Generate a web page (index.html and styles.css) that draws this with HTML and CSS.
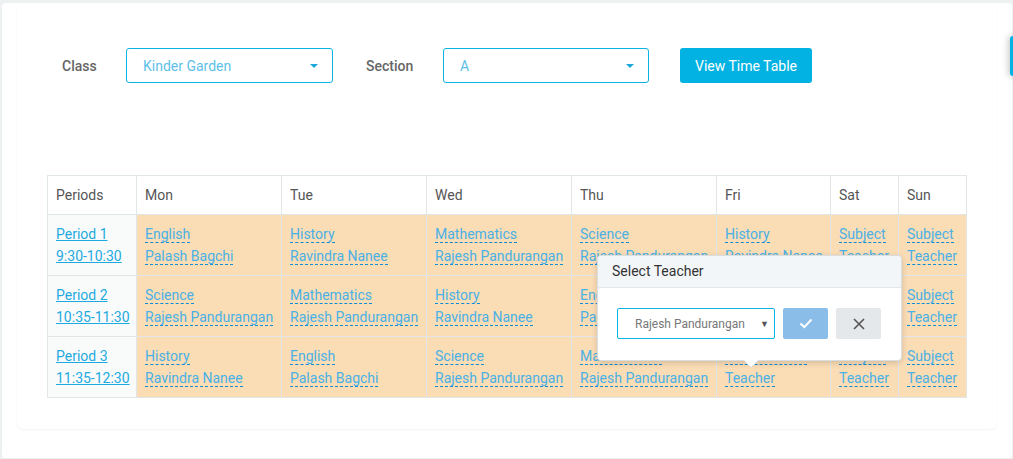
FILE: index.html
```html
<!DOCTYPE html>
<html lang="en">
<head>
  <meta charset="UTF-8">
  <meta name="viewport" content="width=device-width, initial-scale=1.0">
  <title>Time Table</title>
  <link rel="stylesheet" href="styles.css">
</head>
<body>
  <div class="panel">
    <div class="card">
      <!-- Filtros -->
      <div class="filters">
        <label class="f-label">Class</label>
        <div class="select class-select"><span>Kinder Garden</span><i class="caret"></i></div>
        <label class="f-label section-label">Section</label>
        <div class="select section-select"><span>A</span><i class="caret"></i></div>
        <button class="btn-view">View Time Table</button>
      </div>

      <!-- Tabela -->
      <div class="timetable-wrap">
        <table class="timetable">
          <colgroup>
            <col style="width:89px"><col style="width:145px"><col style="width:145px"><col style="width:145px">
            <col style="width:145px"><col style="width:114px"><col style="width:68px"><col style="width:68px">
          </colgroup>
          <thead>
            <tr>
              <th>Periods</th><th>Mon</th><th>Tue</th><th>Wed</th><th>Thu</th><th>Fri</th><th>Sat</th><th>Sun</th>
            </tr>
          </thead>
          <tbody>
            <tr>
              <td class="period"><a href="#">Period 1 </a><br><a href="#">9:30-10:30</a></td>
              <td><a class="ed">English</a><br><a class="ed">Palash Bagchi</a></td>
              <td><a class="ed">History</a><br><a class="ed">Ravindra Nanee</a></td>
              <td><a class="ed">Mathematics</a><br><a class="ed">Rajesh Pandurangan</a></td>
              <td><a class="ed">Science</a><br><a class="ed">Rajesh Pandurangan</a></td>
              <td><a class="ed">History</a><br><a class="ed">Ravindra Nanee</a></td>
              <td><a class="ed">Subject</a><br><a class="ed">Teacher</a></td>
              <td><a class="ed">Subject</a><br><a class="ed">Teacher</a></td>
            </tr>
            <tr>
              <td class="period"><a href="#">Period 2 </a><br><a href="#">10:35-11:30</a></td>
              <td><a class="ed">Science</a><br><a class="ed">Rajesh Pandurangan</a></td>
              <td><a class="ed">Mathematics</a><br><a class="ed">Rajesh Pandurangan</a></td>
              <td><a class="ed">History</a><br><a class="ed">Ravindra Nanee</a></td>
              <td><a class="ed">English</a><br><a class="ed">Palash Bagchi</a></td>
              <td><a class="ed">English</a><br><a class="ed">Palash Bagchi</a></td>
              <td><a class="ed">Subject</a><br><a class="ed">Teacher</a></td>
              <td><a class="ed">Subject</a><br><a class="ed">Teacher</a></td>
            </tr>
            <tr>
              <td class="period"><a href="#">Period 3 </a><br><a href="#">11:35-12:30</a></td>
              <td><a class="ed">History</a><br><a class="ed">Ravindra Nanee</a></td>
              <td><a class="ed">English</a><br><a class="ed">Palash Bagchi</a></td>
              <td><a class="ed">Science</a><br><a class="ed">Rajesh Pandurangan</a></td>
              <td><a class="ed">Mathematics</a><br><a class="ed">Rajesh Pandurangan</a></td>
              <td><a class="ed">Mathematics</a><br><a class="ed">Teacher</a></td>
              <td><a class="ed">Subject</a><br><a class="ed">Teacher</a></td>
              <td><a class="ed">Subject</a><br><a class="ed">Teacher</a></td>
            </tr>
          </tbody>
        </table>

        <!-- Popup de edição -->
        <div class="popover">
          <div class="popover-title">Select Teacher</div>
          <div class="popover-body">
            <div class="pop-select"><span>Rajesh Pandurangan</span><i>&#9660;</i></div>
            <button class="btn-ok">
              <svg width="14" height="11" viewBox="0 0 14 11"><path d="M1.5 5.5l3.8 3.6L12.5 1.5" fill="none" stroke="#fff" stroke-width="2"/></svg>
            </button>
            <button class="btn-cancel">
              <svg width="12" height="12" viewBox="0 0 12 12"><path d="M1 1l10 10M11 1L1 11" fill="none" stroke="#555" stroke-width="1.6"/></svg>
            </button>
          </div>
        </div>
      </div>
    </div>
  </div>
  <div class="side-tab"></div>
</body>
</html>
```

FILE: styles.css
```css
body {
  margin: 0;
  padding: 0;
  height: 459px;
  overflow: hidden;
  background-color: #eef1f2;
  font-family: Roboto, "Liberation Sans", sans-serif;
  font-size: 14px;
  color: #555;
}

.panel {
  margin: 3px 1px 0 2px;
  height: 455px;
  padding: 0 15px;
  background-color: #fff;
  border-radius: 4px;
}

.card {
  height: 426px;
  padding: 45px 30px 0;
  box-sizing: border-box;
  border-radius: 0 0 6px 6px;
  box-shadow: 0 1px 2px rgba(0, 0, 0, 0.05);
}

.filters {
  display: flex;
  align-items: center;
  height: 35px;
  padding-left: 15px;
}

.f-label {
  width: 64px;
  font-weight: 500;
  color: #666;
}

.section-label {
  margin-left: 33px;
  width: 77px;
}

.select {
  display: flex;
  align-items: center;
  justify-content: space-between;
  height: 35px;
  padding: 0 14px 0 16px;
  box-sizing: border-box;
  border: 1px solid #0cb2e2;
  border-radius: 3px;
  color: #5dbfe8;
}

.class-select { width: 207px; }
.section-select { width: 206px; }

.caret {
  width: 0;
  height: 0;
  border-left: 4px solid transparent;
  border-right: 4px solid transparent;
  border-top: 4px solid #1ca7dd;
}

.btn-view {
  margin-left: 31px;
  width: 132px;
  height: 35px;
  border: none;
  border-radius: 3px;
  background-color: #02b2e2;
  color: #fff;
  font-family: inherit;
  font-size: 14px;
}

.timetable-wrap {
  position: relative;
  margin-top: 92px;
}

.timetable {
  width: 919px;
  border-collapse: collapse;
  table-layout: fixed;
}

.timetable th,
.timetable td {
  border: 1px solid #e1e7e9;
  text-align: left;
  vertical-align: top;
  white-space: nowrap;
}

.timetable th {
  padding: 9px 8px;
  line-height: 20px;
  font-weight: normal;
  color: #555;
  background-color: #fff;
}

.timetable td {
  padding: 8px 8px;
  line-height: 22px;
  background-color: #fadcb5;
}

.timetable td.period {
  background-color: #f9fbfb;
}

.period a {
  color: #1eaae0;
  text-decoration: underline;
}

.ed {
  color: #49b1e6;
  border-bottom: 1px dashed #0a8bd6;
  cursor: pointer;
}

.popover {
  position: absolute;
  left: 550px;
  top: 80px;
  width: 305px;
  box-sizing: border-box;
  background-color: #fff;
  border: 1px solid #d9dee1;
  border-radius: 4px;
  box-shadow: 0 2px 6px rgba(0, 0, 0, 0.15);
}

/* seta do popup */
.popover::before,
.popover::after {
  content: "";
  position: absolute;
  left: 145px;
  border-left: 8px solid transparent;
  border-right: 8px solid transparent;
}

.popover::before {
  bottom: -8px;
  border-top: 8px solid #d9dee1;
}

.popover::after {
  bottom: -7px;
  border-top: 8px solid #fff;
}

.popover-title {
  height: 31px;
  line-height: 30px;
  padding: 0 14px;
  background-color: #f3f6f8;
  border-bottom: 1px solid #e2e7ea;
  border-radius: 4px 4px 0 0;
  color: #333;
}

.popover-body {
  display: flex;
  gap: 8px;
  padding: 20px 19px 21px;
}

.pop-select {
  display: flex;
  align-items: center;
  justify-content: space-between;
  width: 158px;
  height: 31px;
  padding: 0 5px 0 17px;
  box-sizing: border-box;
  border: 1px solid #0cb2e2;
  border-radius: 2px;
  font-size: 12px;
  color: #777;
}

.pop-select i {
  font-style: normal;
  font-size: 9px;
  color: #555;
}

.btn-ok,
.btn-cancel {
  display: flex;
  align-items: center;
  justify-content: center;
  width: 45px;
  height: 31px;
  border: none;
  border-radius: 2px;
}

.btn-ok { background-color: #8bbde9; }
.btn-cancel { background-color: #e4e8eb; }

.side-tab {
  position: absolute;
  top: 36px;
  left: 1010px;
  width: 10px;
  height: 40px;
  background-color: #02b2e2;
  border-radius: 3px 0 0 3px;
  box-shadow: -2px 0 6px rgba(0, 0, 0, 0.2);
}
```
